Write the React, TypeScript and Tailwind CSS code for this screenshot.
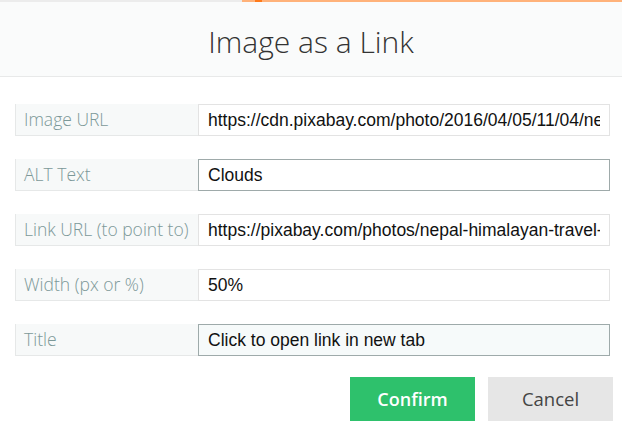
import React from "react";

const rows = [
  { label: "Image URL", value: "https://cdn.pixabay.com/photo/2016/04/05/11/04/nepal-1309206_960_720.jpg", state: "idle" },
  { label: "ALT Text", value: "Clouds", state: "focus" },
  { label: "Link URL (to point to)", value: "https://pixabay.com/photos/nepal-himalayan-travel-1309206/", state: "idle" },
  { label: "Width (px or %)", value: "50%", state: "idle" },
  { label: "Title", value: "Click to open link in new tab", state: "hover" },
];

function Field({ label, value, state }: { label: string; value: string; state: string }) {
  const inputCls =
    state === "focus"
      ? "border-[#9eaaaa] bg-white"
      : state === "hover"
        ? "border-[#9eaaaa] bg-[#f6fafa]"
        : "border-[#e3e3e3] bg-white";
  return (
    <div className="flex h-8">
      <div className="w-[183px] shrink-0 flex items-center pl-[8px] bg-[#f7f9f9] border-l border-b border-[#e6e8e8] text-[17.5px] font-light text-[#7c9898] font-['Open_Sans',sans-serif] whitespace-nowrap">
        {label}
      </div>
      <div className={`flex-1 min-w-0 flex items-center px-[9px] border ${inputCls}`}>
        <div className="flex-1 min-w-0 overflow-hidden whitespace-nowrap text-[17.5px] text-[#111] font-['Liberation_Sans',Arial,sans-serif]">
          {value}
        </div>
      </div>
    </div>
  );
}

export default function App() {
  return (
    <div className="w-[622px] h-[431px] bg-white relative overflow-hidden">
      <div className="flex h-[2px]">
        <div className="w-[242px] bg-[#ececec]" />
        <div className="w-[13px] bg-[#ffb27a]" />
        <div className="w-[7px] bg-[#ff7a1a]" />
        <div className="flex-1 bg-[#ffb27a]" />
      </div>
      <div className="h-[75px] bg-[#fafbfb] border-b border-[#e8e9e9] flex items-center justify-center">
        <h1 className="text-[30px] font-light text-[#333] font-['Open_Sans',sans-serif] mt-[4px]">
          Image as a Link
        </h1>
      </div>
      <div className="flex flex-col gap-[23px] pl-[15px] pr-[12px] pt-[27px]">
        {rows.map((r) => (
          <Field key={r.label} {...r} />
        ))}
      </div>
      <div className="flex justify-end gap-[13px] pr-[9px] mt-[21px]">
        <button className="w-[125px] h-[44px] bg-[#2ec16c] text-white text-[18px] font-semibold font-['Open_Sans',sans-serif]">
          Confirm
        </button>
        <button className="w-[125px] h-[44px] bg-[#e6e6e6] text-[#444] text-[18.5px] font-['Open_Sans',sans-serif]">
          Cancel
        </button>
      </div>
    </div>
  );
}
